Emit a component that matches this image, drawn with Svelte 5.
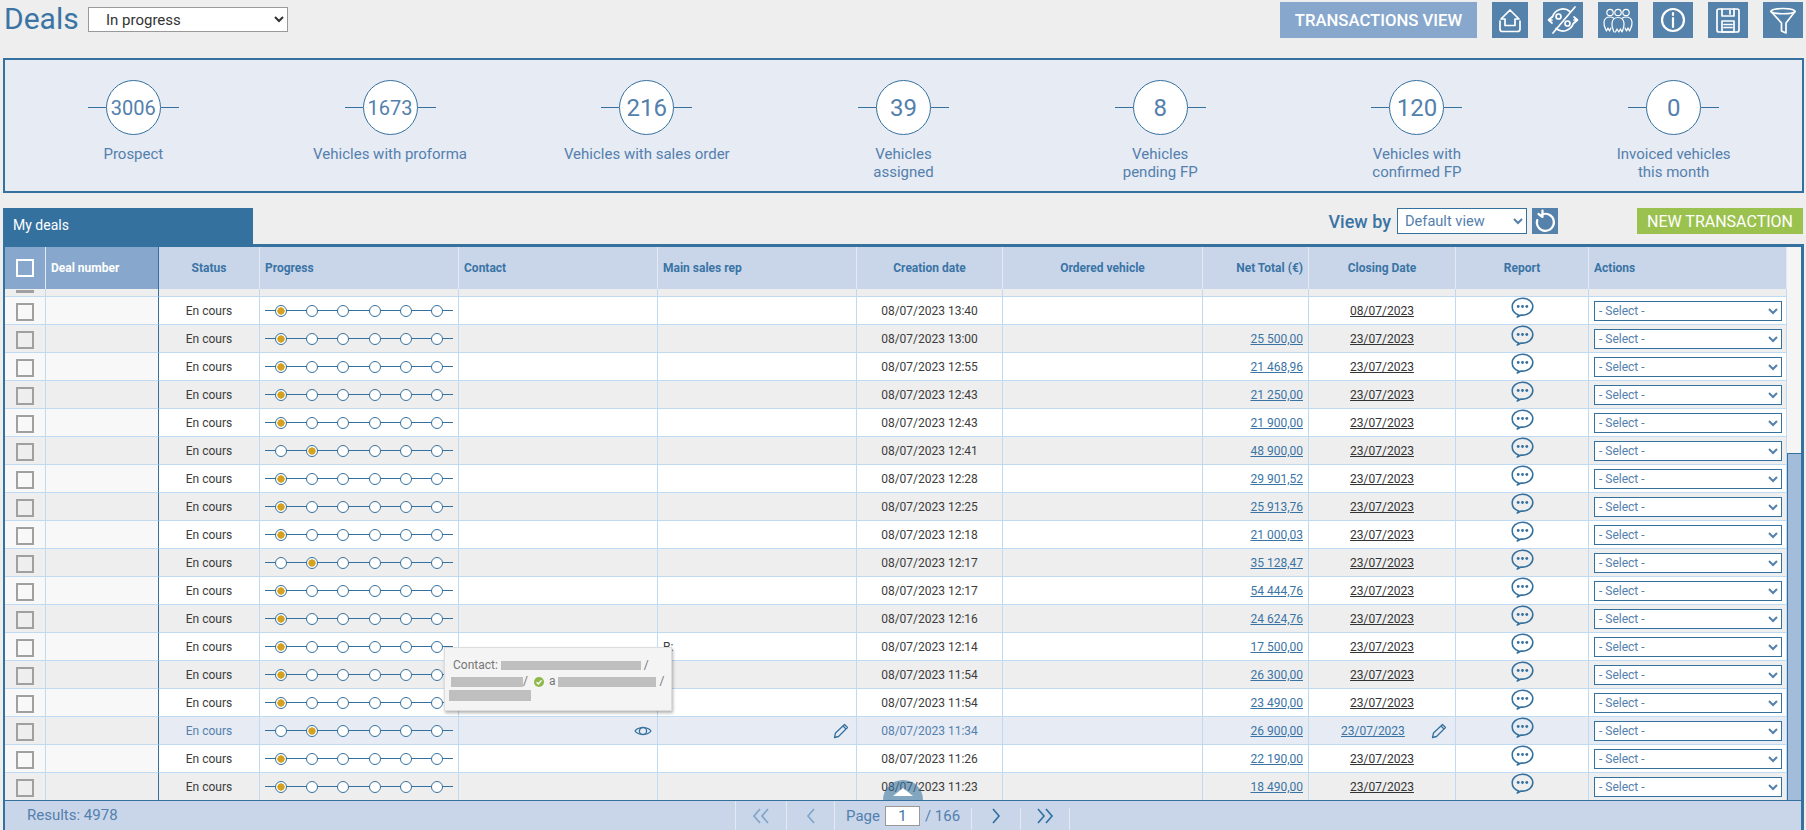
<script>
  const stats = [
    { n: '3006', label: 'Prospect', small: true },
    { n: '1673', label: 'Vehicles with proforma', small: true },
    { n: '216', label: 'Vehicles with sales order' },
    { n: '39', label: 'Vehicles\nassigned' },
    { n: '8', label: 'Vehicles\npending FP' },
    { n: '120', label: 'Vehicles with\nconfirmed FP' },
    { n: '0', label: 'Invoiced vehicles\nthis month' }
  ];
  const rows = [
    ['13:40', '', 0, '08/07/2023'],
    ['13:00', '25 500,00', 0],
    ['12:55', '21 468,96', 0],
    ['12:43', '21 250,00', 0],
    ['12:43', '21 900,00', 0],
    ['12:41', '48 900,00', 1],
    ['12:28', '29 901,52', 0],
    ['12:25', '25 913,76', 0],
    ['12:18', '21 000,03', 0],
    ['12:17', '35 128,47', 1],
    ['12:17', '54 444,76', 0],
    ['12:16', '24 624,76', 0],
    ['12:14', '17 500,00', 0],
    ['11:54', '26 300,00', 0],
    ['11:54', '23 490,00', 0],
    ['11:34', '26 900,00', 1],
    ['11:26', '22 190,00', 0],
    ['11:23', '18 490,00', 0]
  ];
  const widths = [41, 113, 101, 199, 199, 199, 146, 200, 106, 147, 133, 198];
  const steps = [0, 1, 2, 3, 4, 5];
  const HOVER = 15;
</script>

<div class="page">
  <header class="top">
    <h1>Deals</h1>
    <select class="state"><option>In progress</option></select>
    <div class="tools">
      <button class="wide">TRANSACTIONS VIEW</button>
      <button class="ico first" aria-label="Export">
        <svg viewBox="0 0 36 36" class="sv"><path d="M18 8 L27 17 H23 V23.5 H13 V17 H9 Z"/><path d="M8 19 V27 a2.5 2.5 0 0 0 2.5 2.5 H25.5 a2.5 2.5 0 0 0 2.5 -2.5 V19"/></svg>
      </button>
      <button class="ico" aria-label="Hide">
        <svg viewBox="0 0 40 36" class="sv"><path d="M9.5 15 A11 11 0 0 1 27 9.5"/><path d="M30.5 21 A11 11 0 0 1 13 26.5"/><path d="M5.5 18 H9 M9 15 L5.5 18 L9 21 M34.5 18 H31 M31 15 L34.5 18 L31 21"/><path d="M10 31 L32 5"/><circle cx="15.5" cy="14.5" r="2.5"/><circle cx="24.5" cy="21.5" r="2.5"/></svg>
      </button>
      <button class="ico" aria-label="Team">
        <svg viewBox="0 0 40 36" class="sv thin"><circle cx="12" cy="10.5" r="3.2"/><circle cx="20" cy="10.5" r="3.2"/><circle cx="28" cy="10.5" r="3.2"/><path d="M8.5 29 C7 26 5.5 24 6 20 C6.5 16 9 15 12 15 C13.5 15 14.5 15.3 15.5 16 M8.5 29 L10 26 L11.5 29 L13 26"/><path d="M16 30 C15 27 13.5 25 14 21 C14.5 17 17 15.5 20 15.5 C23 15.5 25.5 17 26 21 C26.5 25 25 27 24 30 L22.5 27 L20.8 30 L19 27 L17.5 30"/><path d="M24.5 16 C25.5 15.3 26.5 15 28 15 C31 15 33.5 16 34 20 C34.5 24 33 26 31.5 29 L30 26 L28.5 29 L27 26"/></svg>
      </button>
      <button class="ico" aria-label="Information">
        <svg viewBox="0 0 40 36" class="sv bold"><circle cx="20" cy="18" r="11"/><path d="M20 16 V25"/><path d="M20 11 V13"/></svg>
      </button>
      <button class="ico" aria-label="Save">
        <svg viewBox="0 0 40 36" class="sv"><rect x="9" y="7" width="22" height="23" rx="2"/><path d="M14 7 V14 H26 V7"/><path d="M22 8.5 V12"/><rect x="14" y="19" width="12" height="11"/><path d="M16 22.5 H24 M16 25.5 H24"/></svg>
      </button>
      <button class="ico" aria-label="Filter">
        <svg viewBox="0 0 40 36" class="sv"><path d="M8 9.5 C8 5.5 32 5.5 32 9.5 L23 21 V31 L18.5 29 V21 Z"/><path d="M8 9.5 C10 12.5 30 12.5 32 9.5"/></svg>
      </button>
    </div>
  </header>

  <section class="stats">
    {#each stats as s}
      <div class="stat">
        <div class="dial">
          <span class="tick"></span>
          <span class="circle" class:small={s.small}>{s.n}</span>
          <span class="tick"></span>
        </div>
        <div class="label">{s.label}</div>
      </div>
    {/each}
  </section>

  <div class="bar">
    <div class="tab">My deals</div>
    <div class="viewby">
      <span class="vb">View by</span>
      <select class="view"><option>Default view</option></select>
      <button class="reset" aria-label="Reset view">
        <svg viewBox="0 0 26 26" class="sv bold"><path d="M10 6.5 A8.5 8.5 0 1 1 5.2 12"/><path d="M10.5 2.5 V9 L6.5 6" /></svg>
      </button>
    </div>
    <button class="new">NEW TRANSACTION</button>
  </div>

  <div class="frame">
    <div class="middle">
      <div class="tablewrap">
        <table>
          <colgroup>
            {#each widths as w}<col style="width:{w}px" />{/each}
          </colgroup>
          <thead>
            <tr>
              <th class="fix"><span class="cb head"></span></th>
              <th class="fix deal left">Deal number</th>
              <th>Status</th>
              <th class="left">Progress</th>
              <th class="left">Contact</th>
              <th class="left">Main sales rep</th>
              <th>Creation date</th>
              <th>Ordered vehicle</th>
              <th class="right">Net Total (€)</th>
              <th>Closing Date</th>
              <th>Report</th>
              <th class="left">Actions</th>
            </tr>
          </thead>
          <tbody>
            <tr class="stub">
              <td class="c0"><span class="stubbar"></span></td>
              <td class="c1"></td><td></td><td></td><td></td><td></td><td></td><td></td><td></td><td></td><td></td><td></td>
            </tr>
            {#each rows as r, i}
              <tr class:even={i % 2 === 1} class:hover={i === HOVER}>
                <td class="c0"><span class="cb"></span></td>
                <td class="c1"></td>
                <td class="status">En cours</td>
                <td>
                  <div class="steps">
                    {#each steps as s}
                      <span class="dot" class:on={s === r[2]}></span>
                    {/each}
                  </div>
                </td>
                <td>
                  {#if i === HOVER}
                    <div class="endicon eye">
                      <svg viewBox="0 0 18 12" width="18" height="12" class="ln"><path d="M1 6 C4 1.5 14 1.5 17 6 C14 10.5 4 10.5 1 6 Z"/><circle cx="9" cy="6" r="3.6"/></svg>
                    </div>
                  {/if}
                </td>
                <td>
                  {#if i === 12}<span class="clip">R:</span>{/if}
                  {#if i === HOVER}
                    <div class="endicon pen">
                      <svg viewBox="0 0 16 16" width="16" height="16" class="ln"><path d="M1.5 14.5 L2.5 10 L11.5 1.5 L14.5 4.5 L5.5 13.5 Z"/><path d="M10 3 L13 6"/></svg>
                    </div>
                  {/if}
                </td>
                <td class="center">08/07/2023 {r[0]}</td>
                <td></td>
                <td class="net">{#if r[1]}<a href="#net">{r[1]}</a>{/if}</td>
                <td class="center">
                  {#if i === HOVER}
                    <div class="hoverdate">
                      <a href="#date">23/07/2023</a>
                      <svg viewBox="0 0 16 16" width="16" height="16" class="ln"><path d="M1.5 14.5 L2.5 10 L11.5 1.5 L14.5 4.5 L5.5 13.5 Z"/><path d="M10 3 L13 6"/></svg>
                    </div>
                  {:else}
                    <a class="date" href="#date">{r[3] ?? '23/07/2023'}</a>
                  {/if}
                </td>
                <td class="center">
                  <svg class="chat ln" viewBox="0 0 24 22" width="23" height="21"><path d="M8 18.8 C3.5 17.4 1.2 14 1.2 10.2 C1.2 5 6 1.2 12 1.2 C18 1.2 22.8 5 22.8 10 C22.8 15 18 19 12 19 C11.4 19 11 19 10.5 18.9 L6.5 21 Z"/><circle class="fill" cx="7.5" cy="10" r="1.5"/><circle class="fill" cx="12" cy="10" r="1.5"/><circle class="fill" cx="16.5" cy="10" r="1.5"/></svg>
                </td>
                <td class="act"><select class="action"><option>- Select -</option></select></td>
              </tr>
            {/each}
          </tbody>
        </table>

        <div class="tip">
          <div class="tipline first">Contact: <span class="red r1"></span> /</div>
          <div class="tipline second"><span class="red r2"></span>/<svg class="ok" viewBox="0 0 10 10" width="10" height="10"><circle cx="5" cy="5" r="5" fill="#8fb84a"/><path d="M2.6 5.2 L4.4 7 L7.5 3.4" fill="none" stroke="#fff" stroke-width="1.4"/></svg>a<span class="red r3"></span> /</div>
          <div class="tipline third"><span class="red r4"></span></div>
        </div>

        <button class="totop" aria-label="Back to top"><span class="tri"></span></button>
      </div>

      <div class="scroll"><div class="thumb"></div></div>
    </div>

    <footer class="foot">
      <div class="results">Results: 4978</div>
      <div class="cell c51 off">
        <svg viewBox="0 0 18 16" width="18" height="16" class="chev"><path d="M8 1 L2 8 L8 15 M16 1 L10 8 L16 15"/></svg>
      </div>
      <div class="cell c48 off">
        <svg viewBox="0 0 10 16" width="10" height="16" class="chev"><path d="M8 1 L2 8 L8 15"/></svg>
      </div>
      <div class="cell c137">
        <span>Page</span><input class="pageno" value="1" /><span>/ 166</span>
      </div>
      <div class="cell c49">
        <svg viewBox="0 0 10 16" width="10" height="16" class="chev"><path d="M2 1 L8 8 L2 15"/></svg>
      </div>
      <div class="cell c50 edge">
        <svg viewBox="0 0 18 16" width="18" height="16" class="chev"><path d="M2 1 L8 8 L2 15 M10 1 L16 8 L10 15"/></svg>
      </div>
    </footer>
  </div>
</div>

<style>
  :global(body) {
    margin: 0;
    background: #eeeeee;
  }
  .page {
    width: 1806px;
    height: 830px;
    overflow: hidden;
    font-family: Roboto, "Liberation Sans", sans-serif;
    font-size: 12px;
    color: #3c3c3c;
    background: #eeeeee;
  }
  button {
    border: 0;
    padding: 0;
    font-family: inherit;
    cursor: pointer;
  }
  .top {
    display: flex;
    align-items: flex-start;
    height: 38px;
    padding: 2px 3px 0 4px;
    box-sizing: border-box;
  }
  h1 {
    margin: 0;
    width: 84px;
    font-size: 30px;
    font-weight: 400;
    line-height: 34px;
    color: #3a74a5;
  }
  .state {
    margin-top: 5px;
    width: 200px;
    height: 25px;
    padding-left: 13px;
    border: 1px solid #999;
    border-radius: 0;
    background: #fff;
    color: #333;
    font: 15px Roboto, sans-serif;
  }
  .tools {
    margin-left: auto;
    display: flex;
    gap: 15px;
  }
  .wide {
    width: 197px;
    height: 36px;
    background: #87a8cc;
    color: #fff;
    font-size: 16.7px;
    font-weight: 500;
  }
  .ico {
    width: 40px;
    height: 36px;
    background: #5482ab;
    display: flex;
  }
  .ico.first {
    width: 36px;
  }
  .sv {
    width: 100%;
    height: 100%;
    fill: none;
    stroke: #fff;
    stroke-width: 1.7;
    stroke-linejoin: round;
    stroke-linecap: round;
  }
  .sv.thin {
    stroke-width: 1.2;
  }
  .sv.bold {
    stroke-width: 2.2;
  }
  .stats {
    margin: 20px 2px 0 3px;
    height: 135px;
    box-sizing: border-box;
    border: 2px solid #35719f;
    padding-top: 20px;
    background: #e6ebf4;
    display: grid;
    grid-template-columns: repeat(7, 1fr);
    color: #5480ad;
  }
  .stat {
    display: flex;
    flex-direction: column;
    align-items: center;
  }
  .dial {
    display: flex;
    align-items: center;
  }
  .tick {
    width: 18px;
    height: 1px;
    background: #35719f;
  }
  .circle {
    width: 55px;
    height: 55px;
    box-sizing: border-box;
    border: 1px solid #35719f;
    border-radius: 50%;
    background: #fff;
    font-size: 24px;
    display: flex;
    align-items: center;
    justify-content: center;
  }
  .circle.small {
    font-size: 20px;
  }
  .label {
    margin-top: 10px;
    font-size: 15px;
    line-height: 18px;
    text-align: center;
    white-space: pre-line;
  }
  .bar {
    margin: 15px 3px 0 3px;
    height: 36px;
    display: flex;
    align-items: flex-start;
  }
  .tab {
    width: 250px;
    height: 36px;
    padding-left: 10px;
    box-sizing: border-box;
    background: #35719f;
    color: #fff;
    font-size: 14px;
    line-height: 35px;
  }
  .viewby {
    margin-left: auto;
    display: flex;
    align-items: center;
    gap: 5px;
    height: 26px;
  }
  .vb {
    font-size: 18px;
    font-weight: 500;
    color: #3a74a5;
    margin-right: 1px;
  }
  .view {
    width: 130px;
    height: 26px;
    border: 1px solid #35719f;
    border-radius: 0;
    background: #fff;
    padding-left: 3px;
    color: #5480ad;
    font: 14.6px Roboto, sans-serif;
  }
  .reset {
    width: 26px;
    height: 26px;
    background: #5482ab;
    display: flex;
  }
  .new {
    margin-left: 79px;
    width: 166px;
    height: 26px;
    background: #9bc24f;
    color: #fff;
    font-size: 16px;
    font-weight: 400;
  }
  .frame {
    margin: 0 2px 0 3px;
    height: 586px;
    box-sizing: border-box;
    border: solid #35719f;
    border-width: 3px 3px 2px 2px;
    display: flex;
    flex-direction: column;
  }
  .middle {
    display: flex;
    height: 553px;
  }
  .tablewrap {
    position: relative;
    width: 1782px;
    height: 553px;
    overflow: hidden;
  }
  table {
    table-layout: fixed;
    width: 1782px;
    border-collapse: separate;
    border-spacing: 0;
  }
  th {
    height: 42px;
    padding: 0 5px;
    box-sizing: border-box;
    background: #c9d6ea;
    color: #3a74a5;
    font-size: 12px;
    font-weight: 700;
    border-right: 1px solid #e4eaf4;
    text-align: center;
  }
  th.left {
    text-align: left;
  }
  th.right {
    text-align: right;
  }
  th.fix {
    background: #87a8cc;
    color: #fff;
    padding: 0;
  }
  th.deal {
    padding-left: 5px;
    border-right: 1px solid #35719f;
  }
  td {
    height: 28px;
    padding: 0;
    box-sizing: border-box;
    background: #fff;
    border-right: 1px solid #c0daf2;
    border-bottom: 1px solid #c0daf2;
    overflow: hidden;
    white-space: nowrap;
  }
  tr.even td {
    background: #eeeeee;
  }
  tr.hover td {
    background: #e6ebf4;
    color: #5480ad;
  }
  .stub td {
    height: 8px;
    background: #eeeeee;
    line-height: 0;
    vertical-align: top;
  }
  td.c0,
  td.c1 {
    background: #f8f8f8;
  }
  tr.even td.c0,
  tr.even td.c1 {
    background: #eeeeee;
  }
  tr.stub td.c0,
  tr.stub td.c1 {
    background: #eeeeee;
  }
  td.c1 {
    border-right-color: #35719f;
  }
  td.c0,
  th:first-child {
    text-align: center;
  }
  .stubbar {
    display: inline-block;
    width: 18px;
    height: 3px;
    background: #a0a0a0;
    margin-top: 0;
  }
  .cb {
    display: block;
    width: 18px;
    height: 18px;
    box-sizing: border-box;
    margin: 0 auto;
    border: 2px solid #a0a0a0;
    position: relative;
    top: 1px;
  }
  .cb.head {
    border-color: #fff;
    top: 0;
  }
  .status,
  .center {
    text-align: center;
  }
  .steps {
    position: relative;
    margin-left: 5px;
    width: 188px;
    height: 12px;
    display: flex;
    justify-content: space-between;
    align-items: center;
    padding: 0 10px;
    box-sizing: border-box;
    background: linear-gradient(#35719f, #35719f) center / 100% 1px no-repeat;
  }
  .dot {
    width: 10px;
    height: 10px;
    box-sizing: content-box;
    border: 1px solid #35719f;
    border-radius: 50%;
    background: #fff;
  }
  .dot.on {
    background: radial-gradient(circle, #d6a11f 0 3.4px, #fff 3.9px);
  }
  .endicon {
    display: flex;
    justify-content: flex-end;
    align-items: center;
    height: 27px;
  }
  .endicon.eye {
    padding-right: 5px;
  }
  .endicon.pen {
    padding-right: 7px;
  }
  .ln {
    fill: none;
    stroke: #35719f;
    stroke-width: 1.3;
    stroke-linejoin: round;
  }
  .ln .fill {
    fill: #35719f;
    stroke: none;
  }
  .clip {
    padding-left: 5px;
  }
  .net {
    text-align: right;
    padding-right: 5px;
  }
  a {
    color: #3a74a5;
    text-decoration: underline;
  }
  a.date {
    color: #333;
  }
  .hoverdate {
    display: flex;
    align-items: center;
    justify-content: space-between;
    padding: 0 8px 0 32px;
  }
  .chat {
    display: block;
    margin: 0 auto;
    position: relative;
    top: -3px;
    stroke-width: 1.6;
  }
  .act {
    padding: 0 5px;
  }
  .action {
    display: block;
    width: 188px;
    height: 20px;
    border: 1.5px solid #35719f;
    border-radius: 0;
    background: #fff;
    padding: 0;
    color: #5480ad;
    font: 12px Roboto, sans-serif;
  }
  .tip {
    position: absolute;
    left: 439px;
    top: 400px;
    width: 228px;
    height: 64px;
    box-sizing: border-box;
    background: #f4f4f4;
    border: 1px solid #ddd;
    box-shadow: 1px 2px 3px rgba(0, 0, 0, 0.3);
    color: #777;
    font-size: 12px;
    line-height: 15px;
  }
  .tipline {
    display: flex;
    align-items: center;
    white-space: pre;
  }
  .tipline.first {
    padding: 10px 0 0 8px;
  }
  .tipline.second {
    padding-left: 6px;
    margin-top: 1px;
  }
  .tipline.third {
    padding-left: 4px;
    margin-top: 1px;
  }
  .red {
    display: inline-block;
    background: #bfbfbf;
  }
  .r1 {
    width: 140px;
    height: 9px;
  }
  .r2 {
    width: 72px;
    height: 10px;
  }
  .r3 {
    width: 98px;
    height: 10px;
    margin-left: 3px;
  }
  .r4 {
    width: 82px;
    height: 11px;
  }
  .ok {
    margin: 0 5px 0 6px;
  }
  .totop {
    position: absolute;
    left: 878px;
    top: 533px;
    width: 40px;
    height: 20px;
    border-radius: 20px 20px 0 0;
    background: rgba(53, 113, 159, 0.58);
    display: flex;
    justify-content: center;
    align-items: flex-end;
    padding-bottom: 4px;
    box-sizing: border-box;
  }
  .tri {
    width: 0;
    height: 0;
    border: solid transparent;
    border-width: 0 10px 8px;
    border-bottom-color: #fff;
  }
  .scroll {
    width: 14px;
    height: 553px;
    background: #f5f5f5;
    display: flex;
    flex-direction: column;
    justify-content: flex-end;
    box-sizing: border-box;
  }
  .thumb {
    height: 347px;
    box-sizing: border-box;
    background: #a3bcd9;
    border: solid #35719f;
    border-width: 1px 0 0 1px;
  }
  .foot {
    flex: 1;
    display: flex;
    background: #c9d6ea;
    border-top: 1px solid #35719f;
    color: #5480ad;
    font-size: 15px;
  }
  .results {
    width: 730px;
    padding-left: 22px;
    box-sizing: border-box;
    line-height: 29px;
  }
  .cell {
    display: flex;
    align-items: center;
    justify-content: center;
    box-sizing: border-box;
    border-left: 1px solid #e4eaf4;
  }
  .c51 {
    width: 51px;
  }
  .c48 {
    width: 48px;
  }
  .c137 {
    width: 137px;
    justify-content: flex-start;
    padding-left: 11px;
  }
  .c49 {
    width: 49px;
    margin-top: 7px;
    padding-bottom: 7px;
  }
  .c50 {
    width: 50px;
    margin-top: 7px;
    padding-bottom: 7px;
  }
  .edge {
    border-right: 1px solid #e4eaf4;
  }
  .chev {
    fill: none;
    stroke: #35719f;
    stroke-width: 1.7;
  }
  .off .chev {
    stroke: #7fa5c8;
  }
  .pageno {
    width: 35px;
    height: 20px;
    margin: 0 5px;
    box-sizing: border-box;
    border: 1px solid #999;
    border-radius: 0;
    padding: 0;
    text-align: center;
    background: #fff;
    color: #3a74a5;
    font: 15px Roboto, sans-serif;
  }
</style>
